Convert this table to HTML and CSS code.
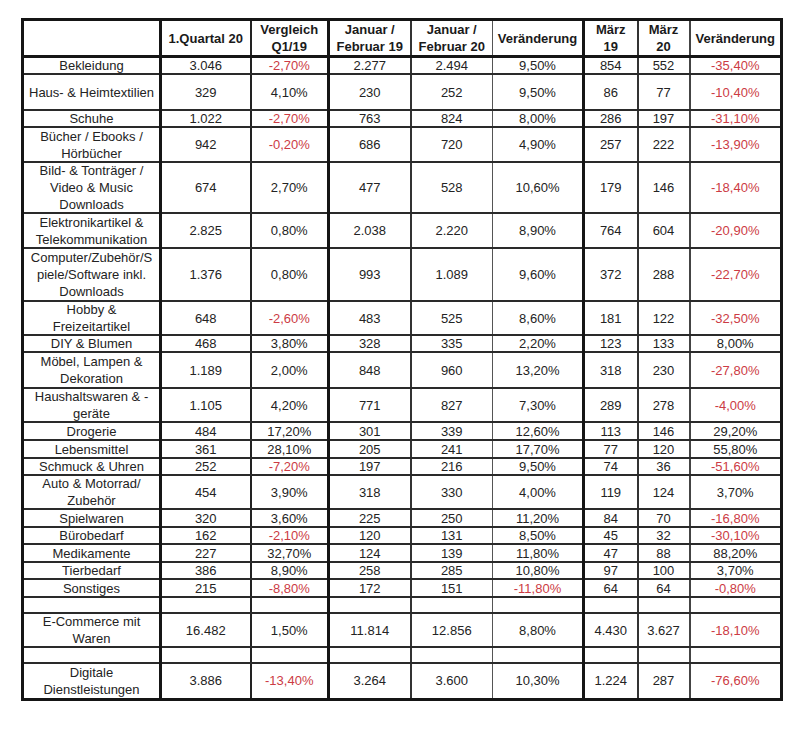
FILE: index.html
```html
<!DOCTYPE html>
<html lang="de">
<head>
<meta charset="utf-8">
<title>E-Commerce Umsätze</title>
<link rel="stylesheet" href="styles.css">
</head>
<body>
<div class="page">
<table class="sheet">
<colgroup>
<col class="c1"><col class="c2"><col class="c3"><col class="c4"><col class="c5"><col class="c6"><col class="c7"><col class="c8"><col class="c9">
</colgroup>
<tr class="head h37">
<th></th><th>1.Quartal 20</th><th><span class="ml">Vergleich<br>Q1/19</span></th><th><span class="ml">Januar /<br>Februar 19</span></th><th><span class="ml">Januar /<br>Februar 20</span></th><th>Veränderung</th><th><span class="ml">März<br>19</span></th><th><span class="ml">März<br>20</span></th><th>Veränderung</th>
</tr>
<tr class="h17"><td>Bekleidung</td><td>3.046</td><td class="r">-2,70%</td><td>2.277</td><td>2.494</td><td>9,50%</td><td>854</td><td>552</td><td class="r">-35,40%</td></tr>
<tr class="h36"><td>Haus- &amp; Heimtextilien</td><td>329</td><td>4,10%</td><td>230</td><td>252</td><td>9,50%</td><td>86</td><td>77</td><td class="r">-10,40%</td></tr>
<tr class="h17"><td>Schuhe</td><td>1.022</td><td class="r">-2,70%</td><td>763</td><td>824</td><td>8,00%</td><td>286</td><td>197</td><td class="r">-31,10%</td></tr>
<tr class="h35"><td><span class="ml">Bücher / Ebooks /<br>Hörbücher</span></td><td>942</td><td class="r">-0,20%</td><td>686</td><td>720</td><td>4,90%</td><td>257</td><td>222</td><td class="r">-13,90%</td></tr>
<tr class="h51"><td><span class="ml">Bild- &amp; Tonträger /<br>Video &amp; Music<br>Downloads</span></td><td>674</td><td>2,70%</td><td>477</td><td>528</td><td>10,60%</td><td>179</td><td>146</td><td class="r">-18,40%</td></tr>
<tr class="h35"><td><span class="ml">Elektronikartikel &amp;<br>Telekommunikation</span></td><td>2.825</td><td>0,80%</td><td>2.038</td><td>2.220</td><td>8,90%</td><td>764</td><td>604</td><td class="r">-20,90%</td></tr>
<tr class="h53"><td><span class="ml">Computer/Zubehör/S<br>piele/Software inkl.<br>Downloads</span></td><td>1.376</td><td>0,80%</td><td>993</td><td>1.089</td><td>9,60%</td><td>372</td><td>288</td><td class="r">-22,70%</td></tr>
<tr class="h34"><td><span class="ml">Hobby &amp;<br>Freizeitartikel</span></td><td>648</td><td class="r">-2,60%</td><td>483</td><td>525</td><td>8,60%</td><td>181</td><td>122</td><td class="r">-32,50%</td></tr>
<tr class="h17"><td>DIY &amp; Blumen</td><td>468</td><td>3,80%</td><td>328</td><td>335</td><td>2,20%</td><td>123</td><td>133</td><td>8,00%</td></tr>
<tr class="h36"><td><span class="ml">Möbel, Lampen &amp;<br>Dekoration</span></td><td>1.189</td><td>2,00%</td><td>848</td><td>960</td><td>13,20%</td><td>318</td><td>230</td><td class="r">-27,80%</td></tr>
<tr class="h34"><td><span class="ml">Haushaltswaren &amp; -<br>geräte</span></td><td>1.105</td><td>4,20%</td><td>771</td><td>827</td><td>7,30%</td><td>289</td><td>278</td><td class="r">-4,00%</td></tr>
<tr class="h18"><td>Drogerie</td><td>484</td><td>17,20%</td><td>301</td><td>339</td><td>12,60%</td><td>113</td><td>146</td><td>29,20%</td></tr>
<tr class="h18"><td>Lebensmittel</td><td>361</td><td>28,10%</td><td>205</td><td>241</td><td>17,70%</td><td>77</td><td>120</td><td>55,80%</td></tr>
<tr class="h17"><td>Schmuck &amp; Uhren</td><td>252</td><td class="r">-7,20%</td><td>197</td><td>216</td><td>9,50%</td><td>74</td><td>36</td><td class="r">-51,60%</td></tr>
<tr class="h34"><td><span class="ml">Auto &amp; Motorrad/<br>Zubehör</span></td><td>454</td><td>3,90%</td><td>318</td><td>330</td><td>4,00%</td><td>119</td><td>124</td><td>3,70%</td></tr>
<tr class="h18"><td>Spielwaren</td><td>320</td><td>3,60%</td><td>225</td><td>250</td><td>11,20%</td><td>84</td><td>70</td><td class="r">-16,80%</td></tr>
<tr class="h17"><td>Bürobedarf</td><td>162</td><td class="r">-2,10%</td><td>120</td><td>131</td><td>8,50%</td><td>45</td><td>32</td><td class="r">-30,10%</td></tr>
<tr class="h18"><td>Medikamente</td><td>227</td><td>32,70%</td><td>124</td><td>139</td><td>11,80%</td><td>47</td><td>88</td><td>88,20%</td></tr>
<tr class="h17"><td>Tierbedarf</td><td>386</td><td>8,90%</td><td>258</td><td>285</td><td>10,80%</td><td>97</td><td>100</td><td>3,70%</td></tr>
<tr class="h18"><td>Sonstiges</td><td>215</td><td class="r">-8,80%</td><td>172</td><td>151</td><td class="r">-11,80%</td><td>64</td><td>64</td><td class="r">-0,80%</td></tr>
<tr class="h16"><td></td><td></td><td></td><td></td><td></td><td></td><td></td><td></td><td></td></tr>
<tr class="h34"><td><span class="ml">E-Commerce mit<br>Waren</span></td><td>16.482</td><td>1,50%</td><td>11.814</td><td>12.856</td><td>8,80%</td><td>4.430</td><td>3.627</td><td class="r">-18,10%</td></tr>
<tr class="h16"><td></td><td></td><td></td><td></td><td></td><td></td><td></td><td></td><td></td></tr>
<tr class="h36"><td><span class="ml">Digitale<br>Dienstleistungen</span></td><td>3.886</td><td class="r">-13,40%</td><td>3.264</td><td>3.600</td><td>10,30%</td><td>1.224</td><td>287</td><td class="r">-76,60%</td></tr>
</table>
</div>
</body>
</html>
```

FILE: styles.css
```css
html, body {
  margin: 0;
  padding: 0;
  background: #ffffff;
}

.page {
  padding: 18px 0 0 21px;
}

.sheet {
  border-collapse: collapse;
  table-layout: fixed;
  width: 761px;
  border: 3px solid #151515;
  font-family: "Liberation Sans", Arial, sans-serif;
  font-size: 13px;
  line-height: 15px;
  color: #232323;
}

.c1 { width: 138px; }
.c2 { width: 90px; }
.c3 { width: 78px; }
.c4 { width: 82px; }
.c5 { width: 82px; }
.c6 { width: 91px; }
.c7 { width: 54px; }
.c8 { width: 52px; }
.c9 { width: 92px; }

.sheet td, .sheet th {
  padding: 0 2px;
  text-align: center;
  vertical-align: middle;
  white-space: nowrap;
  overflow: visible;
  border-top: 2px solid #2a2a2a;
  border-bottom: 2px solid #2a2a2a;
  border-left: 1px solid #555555;
  border-right: 1px solid #555555;
}

.ml {
  display: block;
  line-height: 17px;
  margin: -1px 0;
}

.sheet th {
  font-weight: bold;
  color: #1a1a1a;
}

/* vertical line weights per column boundary */
.sheet td:nth-child(1), .sheet th:nth-child(1) { border-right: 3px solid #151515; }
.sheet td:nth-child(2), .sheet th:nth-child(2) { border-right: 2px solid #222222; }
.sheet td:nth-child(3), .sheet th:nth-child(3) { border-right: 3px solid #151515; }
.sheet td:nth-child(4), .sheet th:nth-child(4) { border-right: 2px solid #333333; }
.sheet td:nth-child(5), .sheet th:nth-child(5) { border-right: 1px solid #555555; }
.sheet td:nth-child(6), .sheet th:nth-child(6) { border-right: 3px solid #151515; }
.sheet td:nth-child(7), .sheet th:nth-child(7) { border-right: 2px solid #333333; }
.sheet td:nth-child(8), .sheet th:nth-child(8) { border-right: 2px solid #444444; }

.head th { border-bottom: 3px solid #151515; }

.r { color: #cc3b44; }

.h16 { height: 16px; }
.h17 { height: 17px; }
.h18 { height: 18px; }
.h34 { height: 34px; }
.h35 { height: 35px; }
.h36 { height: 36px; }
.h37 { height: 37px; }
.h51 { height: 51px; }
.h53 { height: 53px; }
```
